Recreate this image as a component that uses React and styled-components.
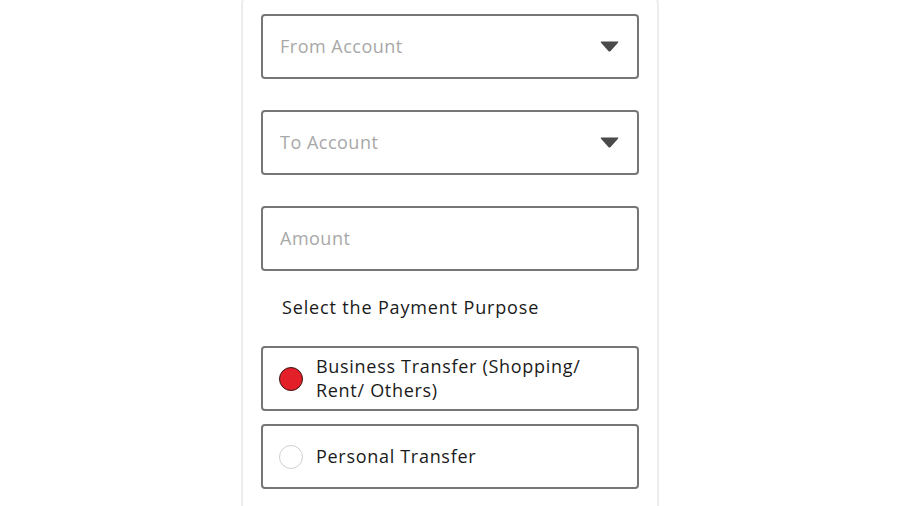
import React, { useState } from "react"
import styled, { createGlobalStyle } from "styled-components"

const GlobalStyle = createGlobalStyle`
  html, body {
    margin: 0;
    padding: 0;
    background: #ffffff;
    font-family: "Open Sans", "Noto Sans", sans-serif;
    overflow: hidden;
  }
`

const Caret = () => (
  <svg width="19" height="11" viewBox="0 0 19 11">
    <path d="M1.5 0.5 H17.5 Q19 0.5 18 1.8 L10.6 10 Q9.5 11 8.4 10 L1 1.8 Q0 0.5 1.5 0.5 Z" fill="#4a4a4a" />
  </svg>
)

const purposes = [
  { id: "business", label: "Business Transfer (Shopping/ Rent/ Others)" },
  { id: "personal", label: "Personal Transfer" },
]

const App = () => {
  const [purpose, setPurpose] = useState("business")

  return (
    <Page>
      <GlobalStyle />
      <Card>
        <Field>
          <Placeholder>From Account</Placeholder>
          <Caret />
        </Field>
        <Field>
          <Placeholder>To Account</Placeholder>
          <Caret />
        </Field>
        <Field>
          <Placeholder>Amount</Placeholder>
        </Field>
        <Label>Select the Payment Purpose</Label>
        <Options>
          {purposes.map((p) => (
            <Option key={p.id} onClick={() => setPurpose(p.id)}>
              <Radio checked={purpose === p.id} />
              <OptionText>{p.label}</OptionText>
            </Option>
          ))}
        </Options>
      </Card>
    </Page>
  )
}

export default App

const Page = styled.div`
  width: 900px;
  height: 506px;
  display: flex;
  justify-content: center;
  overflow: hidden;
`

const Card = styled.div`
  width: 378px;
  margin-top: -16px;
  padding: 28px 18px 40px;
  border: 2px solid #ececec;
  border-radius: 22px;
  display: flex;
  flex-direction: column;
  gap: 31px;
  height: 600px;
`

const Field = styled.div`
  height: 61px;
  border: 2px solid #767676;
  border-radius: 4px;
  display: flex;
  align-items: center;
  justify-content: space-between;
  padding: 0 18px 0 17px;
`

const Placeholder = styled.span`
  font-size: 18px;
  color: #a8a8a8;
  letter-spacing: 0.5px;
  margin-top: -2px;
`

const Label = styled.div`
  font-size: 18px;
  line-height: 24px;
  color: #1a1a1a;
  padding-left: 21px;
  margin: -7px 0 -4px;
  letter-spacing: 0.85px;
`

const Options = styled.div`
  display: flex;
  flex-direction: column;
  gap: 13px;
`

const Option = styled.div`
  height: 61px;
  border: 2px solid #767676;
  border-radius: 4px;
  display: flex;
  align-items: center;
  gap: 13px;
  padding: 0 16px;
  cursor: pointer;
`

const Radio = styled.span`
  flex: none;
  width: 24px;
  height: 24px;
  box-sizing: border-box;
  border-radius: 50%;
  border: ${(p) => (p.checked ? "1.5px solid #3a1414" : "1.5px solid #d0d0d0")};
  background: ${(p) => (p.checked ? "#e3202a" : "#ffffff")};
`

const OptionText = styled.span`
  font-size: 18px;
  line-height: 24px;
  color: #1a1a1a;
  letter-spacing: 0.7px;
  max-width: 290px;
  margin-top: -2px;
`
